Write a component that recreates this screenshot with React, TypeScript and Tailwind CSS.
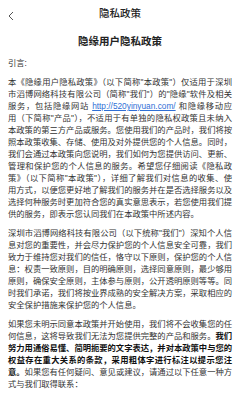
import React from 'react'

type Seg = { t: string; b?: boolean; link?: boolean }

// each paragraph is kept line by line so the breaks match the original page
const intro: Seg[][] = [
  [{ t: '本《隐缘用户隐私政策》（以下简称"本政策"）仅适用于深圳' }],
  [{ t: '市滔博网络科技有限公司（简称"我们"）的"隐缘"软件及相关' }],
  [{ t: '服务，包括隐缘网站 ' }, { t: 'http://520yinyuan.com/', link: true }, { t: ' 和隐缘移动应' }],
  [{ t: '用（下简称"产品"），不适用于有单独的隐私权政策且未纳入' }],
  [{ t: '本政策的第三方产品或服务。您使用我们的产品时，我们将按' }],
  [{ t: '照本政策收集、存储、使用及对外提供您的个人信息。同时，' }],
  [{ t: '我们会通过本政策向您说明，我们如何为您提供访问、更新、' }],
  [{ t: '管理和保护您的个人信息的服务。希望您仔细阅读《隐私政' }],
  [{ t: '策》（以下简称"本政策"），详细了解我们对信息的收集、使' }],
  [{ t: '用方式，以便您更好地了解我们的服务并在是否选择服务以及' }],
  [{ t: '选择何种服务时更加符合您的真实意思表示，若您使用我们提' }],
  [{ t: '供的服务，即表示您认同我们在本政策中所述内容。' }],
]

const principles: Seg[][] = [
  [{ t: '深圳市滔博网络科技有限公司（以下统称"我们"）深知个人信' }],
  [{ t: '息对您的重要性，并会尽力保护您的个人信息安全可靠，我们' }],
  [{ t: '致力于维持您对我们的信任，恪守以下原则，保护您的个人信' }],
  [{ t: '息：权责一致原则，目的明确原则，选择同意原则，最少够用' }],
  [{ t: '原则，确保安全原则，主体参与原则，公开透明原则等等。同' }],
  [{ t: '时我们承诺，我们将按业界成熟的安全解决方案，采取相应的' }],
  [{ t: '安全保护措施来保护您的个人信息。' }],
]

const consent: Seg[][] = [
  [{ t: '如果您未明示同意本政策并开始使用，我们将不会收集您的任' }],
  [{ t: '何信息，这将导致我们无法为您提供完整的产品和服务。' }, { t: '我们', b: true }],
  [{ t: '努力用通俗易懂、简明扼要的文字表达，并对本政策中与您的', b: true }],
  [{ t: '权益存在重大关系的条款，采用粗体字进行标注以提示您注', b: true }],
  [{ t: '意。', b: true }, { t: '如果您有任何疑问、意见或建议，请通过以下任意一种方' }],
  [{ t: '式与我们取得联系：' }],
]

function Paragraph({ lines }: { lines: Seg[][] }) {
  return (
    <div className="mt-[7px]">
      {lines.map((line, i) => {
        const last = i === lines.length - 1
        return (
          <div
            key={i}
            className={`whitespace-nowrap leading-[12px] ${
              last ? 'text-left' : 'text-justify [text-align-last:justify]'
            }`}
          >
            {line.map((seg, j) =>
              seg.link ? (
                <span key={j} className="text-[#2f6fd6] underline">
                  {seg.t}
                </span>
              ) : (
                <span key={j} className={seg.b ? 'font-bold text-[#111]' : ''}>
                  {seg.t}
                </span>
              ),
            )}
          </div>
        )
      })}
    </div>
  )
}

export default function App() {
  return (
    <div
      className="w-[240px] h-[400px] overflow-hidden bg-white text-[#333]"
      style={{ fontFamily: '"Liberation Sans", "Noto Sans CJK SC", sans-serif' }}
    >
      {/* header */}
      <div className="relative h-[28px] flex items-center justify-center">
        <svg
          className="absolute left-[7px] top-[11px]"
          width="8"
          height="10"
          viewBox="0 0 8 10"
          fill="none"
        >
          <path d="M6 1 L2 5 L6 9" stroke="#555" strokeWidth="1" />
        </svg>
        <span className="text-[10.5px] font-medium text-[#222]">隐私政策</span>
      </div>

      <div className="px-2 text-[8.3px]">
        <div className="mt-[7px] text-center text-[10.5px] font-bold leading-[12px] text-[#222]">
          隐缘用户隐私政策
        </div>
        <div className="mt-[10px] leading-[12px]">引言:</div>
        <Paragraph lines={intro} />
        <Paragraph lines={principles} />
        <Paragraph lines={consent} />
      </div>
    </div>
  )
}
